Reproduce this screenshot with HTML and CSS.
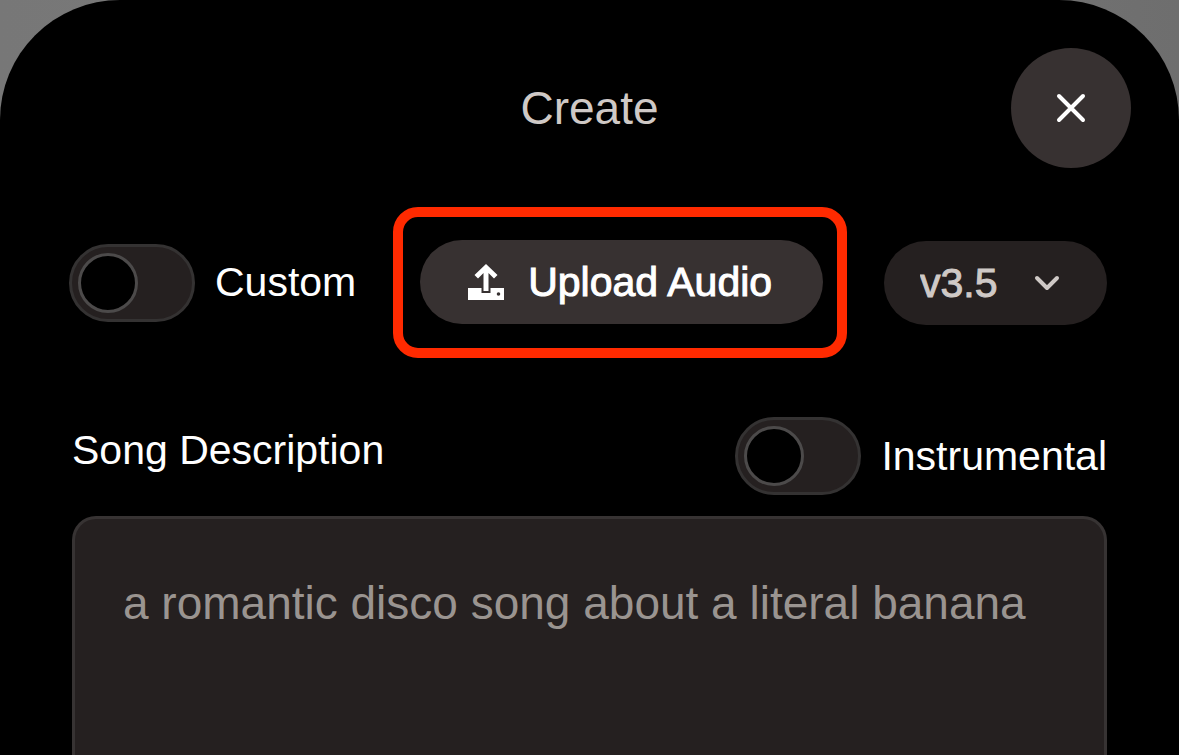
FILE: index.html
```html
<!DOCTYPE html>
<html lang="en">
<head>
    <meta charset="UTF-8">
    <meta name="viewport" content="width=device-width, initial-scale=1.0">
    <title>Create</title>
    <link rel="stylesheet" href="styles.css">
</head>
<body>
    <main class="sheet">
        <header class="sheet-header">
            <h1>Create</h1>
            <button type="button" class="close" aria-label="Close">
                <svg width="36" height="36" viewBox="0 0 36 36" fill="none" stroke="currentColor" stroke-width="4" stroke-linecap="round">
                    <path d="M6 6 30 30M30 6 6 30"/>
                </svg>
            </button>
        </header>

        <form class="create-form">
            <div class="controls">
                <label class="toggle">
                    <input type="checkbox" name="custom">
                    Custom
                </label>

                <div class="highlight">
                    <button type="button" class="upload">
                        <svg width="36" height="36" viewBox="0 0 36 36" fill="currentColor">
                            <path d="M18 0 29.5 11 26 14.5 20.5 9V27H15.500V9L10 14.500 6.500 11Z"/>
                            <path fill-rule="evenodd" d="M0 24H13.500V29H22.500V24H36V36H0ZM30.500 28.200a1.800 1.800 0 1 0 0 3.600a1.800 1.800 0 1 0 0-3.600Z"/>
                        </svg>
                        Upload Audio
                    </button>
                </div>

                <div class="version">
                    <select name="version" aria-label="Version">
                        <option>v3.5</option>
                    </select>
                    <svg width="36" height="36" viewBox="0 0 36 36" fill="none" stroke="currentColor" stroke-width="4" stroke-linecap="round" stroke-linejoin="round">
                        <path d="M8 13 18 23 28 13"/>
                    </svg>
                </div>
            </div>

            <div class="description-head">
                <label for="description" class="description-label">Song Description</label>
                <label class="toggle">
                    <input type="checkbox" name="instrumental">
                    Instrumental
                </label>
            </div>
            <textarea id="description" name="description" placeholder="a romantic disco song about a literal banana"></textarea>
        </form>
    </main>
</body>
</html>
```

FILE: styles.css
```css
* {
    margin: 0;
    padding: 0;
    box-sizing: border-box;
}

body {
    font-family: "Liberation Sans", Arial, sans-serif;
    font-size: 41px;
    background: linear-gradient(90deg, #777, #7c7c7c 50%, #6e6e6e);
    color: #fff;
}

button,
select,
textarea {
    font: inherit;
    border: none;
}

button,
select {
    cursor: pointer;
}

.sheet {
    min-height: 100vh;
    display: flex;
    flex-direction: column;
    background-color: #000;
    border-radius: 120px 120px 0 0;
}

/* Header */
.sheet-header {
    display: grid;
    grid-template-columns: 120px 1fr 120px;
    align-items: center;
    padding: 48px 48px 0;
}

.sheet-header h1 {
    grid-column: 2;
    font-size: 46px;
    font-weight: 400;
    text-align: center;
    color: #cfc9c6;
}

.close {
    display: flex;
    align-items: center;
    justify-content: center;
    height: 120px;
    border-radius: 50%;
    background-color: #373131;
    color: #fff;
}

/* Form */
.create-form {
    flex: 1;
    display: flex;
    flex-direction: column;
    padding: 39px 72px 0;
}

.controls {
    display: flex;
    align-items: center;
    justify-content: space-between;
    margin-left: -3px;
}

.toggle {
    display: flex;
    align-items: center;
    gap: 20px;
    cursor: pointer;
}

.toggle input {
    appearance: none;
    width: 126px;
    height: 78px;
    padding: 6px;
    border: 3px solid #343232;
    border-radius: 39px;
    background-color: #252020;
    cursor: pointer;
}

.toggle input::before {
    content: "";
    display: block;
    box-sizing: border-box;
    width: 60px;
    height: 60px;
    border: 3px solid #4c4a4a;
    border-radius: 50%;
    background-color: #000;
}

.toggle input:checked::before {
    margin-left: auto;
}

.highlight {
    padding: 23px 14px 24px 17px;
    border: 10px solid #ff2a00;
    border-radius: 25px;
}

.upload {
    display: flex;
    align-items: center;
    gap: 24px;
    height: 84px;
    padding: 0 51px 0 48px;
    border-radius: 42px;
    background-color: #373131;
    color: #fff;
    -webkit-text-stroke: 1px;
}

.version {
    display: grid;
    align-items: center;
    color: #cfc9c6;
}

.version select,
.version svg {
    grid-area: 1 / 1;
}

.version select {
    appearance: none;
    height: 84px;
    padding: 0 109px 0 36px;
    border-radius: 42px;
    background-color: #252020;
    color: inherit;
    -webkit-text-stroke: 1px;
}

.version svg {
    justify-self: end;
    margin-right: 42px;
    pointer-events: none;
}

.description-head {
    display: flex;
    justify-content: space-between;
    margin: 59px 0 21px;
}

.description-label {
    line-height: 66px;
}

textarea {
    flex: 1;
    min-height: 239px;
    padding: 48px;
    border: 3px solid #373333;
    border-bottom: none;
    border-radius: 24px 24px 0 0;
    background-color: #252020;
    color: #fff;
    font-size: 46px;
    line-height: 72px;
    resize: none;
    outline: none;
}

textarea::placeholder {
    color: #9a9490;
}

/* Smaller screens */
@media (max-width: 1100px) {
    .controls,
    .description-head {
        flex-wrap: wrap;
        gap: 24px;
    }
}
```
